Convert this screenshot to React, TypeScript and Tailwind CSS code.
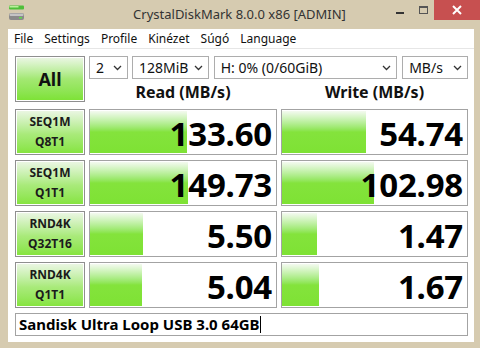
import React from 'react';

interface Row {
    l1: string;
    l2: string;
    read: string;
    readBar: number;
    write: string;
    writeBar: number;
}

const rows: Row[] = [
    { l1: 'SEQ1M', l2: 'Q8T1', read: '133.60', readBar: 97, write: '54.74', writeBar: 84 },
    { l1: 'SEQ1M', l2: 'Q1T1', read: '149.73', readBar: 98, write: '102.98', writeBar: 92 },
    { l1: 'RND4K', l2: 'Q32T16', read: '5.50', readBar: 53, write: '1.47', writeBar: 35 },
    { l1: 'RND4K', l2: 'Q1T1', read: '5.04', readBar: 52, write: '1.67', writeBar: 37 },
];

const Chevron = () => (
    <svg width="9" height="6" viewBox="0 0 9 6" className="shrink-0">
        <path d="M1 1 L4.5 4.5 L8 1" fill="none" stroke="#333" strokeWidth="1.3" />
    </svg>
);

const Select: React.FC<{ label: string; className: string }> = ({ label, className }) => (
    <div className={`h-[23px] border border-[#adadad] bg-white flex items-center justify-between pl-[6px] pr-[5px] text-[14px] text-[#111] ${className}`}>
        <span className="leading-none">{label}</span>
        <Chevron />
    </div>
);

const LabelButton: React.FC<{ l1: string; l2: string }> = ({ l1, l2 }) => (
    <div className="h-[46px] border border-[#8f8f8f] p-px bg-white">
        <div className="h-full bg-linear-to-b from-[#eaf6e2] via-[#a9ea7a] via-55% to-[#86e43e] flex flex-col items-center justify-center text-[12px] font-bold leading-[20px] text-[#1b1b1b]">
            <span>{l1}</span>
            <span>{l2}</span>
        </div>
    </div>
);

const ValueCell: React.FC<{ value: string; bar: number }> = ({ value, bar }) => (
    <div className="h-[46px] border border-[#a3a3a3] bg-white relative">
        <div
            className="absolute left-0 top-px bottom-px bg-linear-to-b from-[#f4faf0] via-[#84e33c] via-50% to-[#7ee234]"
            style={{ width: bar }}
        />
        <div className="relative h-full flex items-center justify-end pr-[4px] pt-[4px] text-[33px] font-bold text-black leading-[40px] tracking-[-0.2px]">
            {value}
        </div>
    </div>
);

const DiskIcon = () => (
    <svg width="18" height="16" viewBox="0 0 18 16">
        <rect x="1" y="0.5" width="15" height="4" rx="1" fill="#4fbf3a" />
        <rect x="1.5" y="1" width="9" height="1.5" fill="#b8f09a" />
        <rect x="1" y="8" width="15" height="7" rx="2" fill="#8a8a8a" />
        <rect x="1.5" y="8.5" width="14" height="2.5" rx="1" fill="#c4c4c4" />
        <rect x="11" y="12" width="3" height="1.5" fill="#5fd94a" />
    </svg>
);

const App: React.FC = () => {
    return (
        <div className="w-[480px] h-[348px] bg-[#d6cbb0] flex flex-col font-['Noto_Sans','Open_Sans',sans-serif] overflow-hidden">
            {/* title bar */}
            <div className="h-[29px] flex items-start shrink-0">
                <div className="pl-[8px] pt-[5px] w-[40px]">
                    <DiskIcon />
                </div>
                <div className="flex-1 text-center text-[13px] text-[#333] pt-[5px] pl-[52px]">
                    CrystalDiskMark 8.0.0 x86 [ADMIN]
                </div>
                <div className="flex items-start">
                    <div className="w-[26px] h-[20px] flex items-center justify-center">
                        <div className="w-[8px] h-[2px] bg-[#333] mt-[5px]" />
                    </div>
                    <div className="w-[20px] h-[20px] flex items-center justify-center">
                        <div className="w-[9px] h-[8px] border border-[#555] border-t-2" />
                    </div>
                    <div className="w-[46px] h-[20px] bg-[#c75050] flex items-center justify-center ml-[1px]">
                        <svg width="10" height="10" viewBox="0 0 10 10">
                            <path d="M1 1 L9 9 M9 1 L1 9" stroke="#fff" strokeWidth="2" />
                        </svg>
                    </div>
                </div>
            </div>

            {/* client area */}
            <div className="flex-1 ml-[8px] mr-[6px] mb-[6px] bg-white flex flex-col">
                <div className="h-[20px] flex items-center gap-[11px] pl-[6px] text-[12px] text-[#111] border-b border-[#e6e6e6] shrink-0">
                    <span>File</span>
                    <span>Settings</span>
                    <span>Profile</span>
                    <span>Kinézet</span>
                    <span>Súgó</span>
                    <span>Language</span>
                </div>

                <div className="pl-[7px] pt-[7px] grid grid-cols-[70px_188px_187px] gap-x-[4px] gap-y-[5px]">
                    <div className="h-[46px] border border-[#8f8f8f] p-px bg-white">
                        <div className="h-full bg-linear-to-b from-[#eaf6e2] via-[#a3e872] via-50% to-[#7ee236] flex items-center justify-center text-[18px] font-bold text-[#111]">
                            All
                        </div>
                    </div>
                    <div className="col-span-2 flex flex-col">
                        <div className="flex">
                            <Select label="2" className="w-[39px]" />
                            <Select label="128MiB" className="w-[77px] ml-[4px]" />
                            <Select label="H: 0% (0/60GiB)" className="w-[184px] ml-[5px]" />
                            <Select label="MB/s" className="w-[66px] ml-[5px]" />
                        </div>
                        <div className="flex flex-1 items-center text-[16px] font-bold text-[#111] pt-[1px]">
                            <div className="w-[188px] text-center">Read (MB/s)</div>
                            <div className="w-[187px] ml-[4px] text-center">Write (MB/s)</div>
                        </div>
                    </div>

                    {rows.map((r, i) => (
                        <React.Fragment key={i}>
                            <LabelButton l1={r.l1} l2={r.l2} />
                            <ValueCell value={r.read} bar={r.readBar} />
                            <ValueCell value={r.write} bar={r.writeBar} />
                        </React.Fragment>
                    ))}

                    <div className="col-span-3 h-[23px] border border-[#a3a3a3] flex items-center pl-[3px] text-[15px] font-bold text-black">
                        <span>Sandisk Ultra Loop USB 3.0 64GB</span>
                        <span className="w-px h-[17px] bg-black" />
                    </div>
                </div>
            </div>
        </div>
    );
};

export default App;
